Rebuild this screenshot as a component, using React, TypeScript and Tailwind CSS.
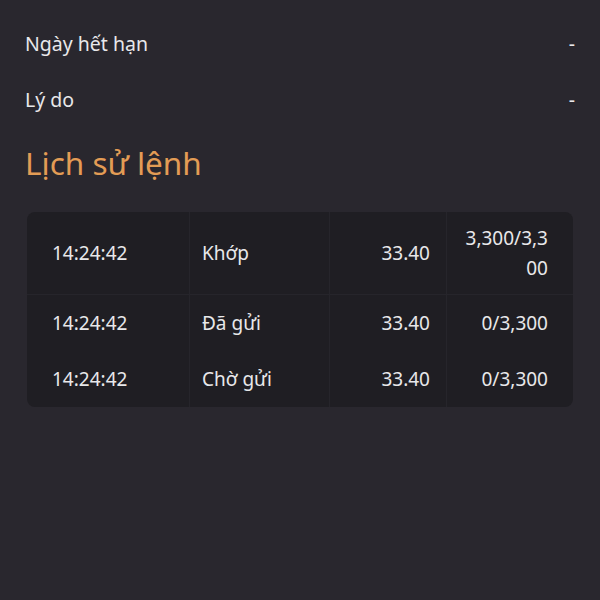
import React from "react";

const rows = [
  { t: "14:24:42", s: "Khớp", p: "33.40", q: "3,300/3,300" },
  { t: "14:24:42", s: "Đã gửi", p: "33.40", q: "0/3,300" },
  { t: "14:24:42", s: "Chờ gửi", p: "33.40", q: "0/3,300" },
];

export default function App() {
  return (
    <div className="min-h-screen w-full overflow-hidden bg-[#29272e] px-[25px] font-['Noto_Sans',sans-serif] text-[#e8e8ea]">
      <div className="-mt-[40px]">
        <div className="flex h-[56px] items-center justify-between text-[19px]">
          <span>Ngày giờ đặt lệnh</span>
          <span>-</span>
        </div>
        <div className="flex h-[56px] items-center justify-between text-[19.5px]">
          <span>Ngày hết hạn</span>
          <span>-</span>
        </div>
        <div className="flex h-[56px] items-center justify-between text-[19.5px]">
          <span>Lý do</span>
          <span>-</span>
        </div>
      </div>
      <h2 className="mt-[15px] text-[31.5px] leading-[40px] text-[#e39c55]">Lịch sử lệnh</h2>
      <div className="mx-[2px] mt-[29px] overflow-hidden rounded-[8px] bg-[#1f1e23]">
        {rows.map((r, i) => {
          const py = i === 0 ? "py-[11px]" : "py-[13px]";
          return (
            <div
              key={i}
              className={`grid grid-cols-[163px_140px_117px_1fr] text-[19px] leading-[30px] ${i === 0 ? "border-b border-[#26252b]" : ""}`}
            >
              <div className={`flex items-center border-r border-[#26252b] pl-[25px] ${py}`}>{r.t}</div>
              <div className={`flex items-center border-r border-[#26252b] pl-[12px] ${py}`}>{r.s}</div>
              <div className={`flex items-center justify-end border-r border-[#26252b] pr-[16px] ${py}`}>{r.p}</div>
              <div className={`break-all pl-[14px] pr-[25px] text-right ${py}`}>{r.q}</div>
            </div>
          );
        })}
      </div>
    </div>
  );
}
